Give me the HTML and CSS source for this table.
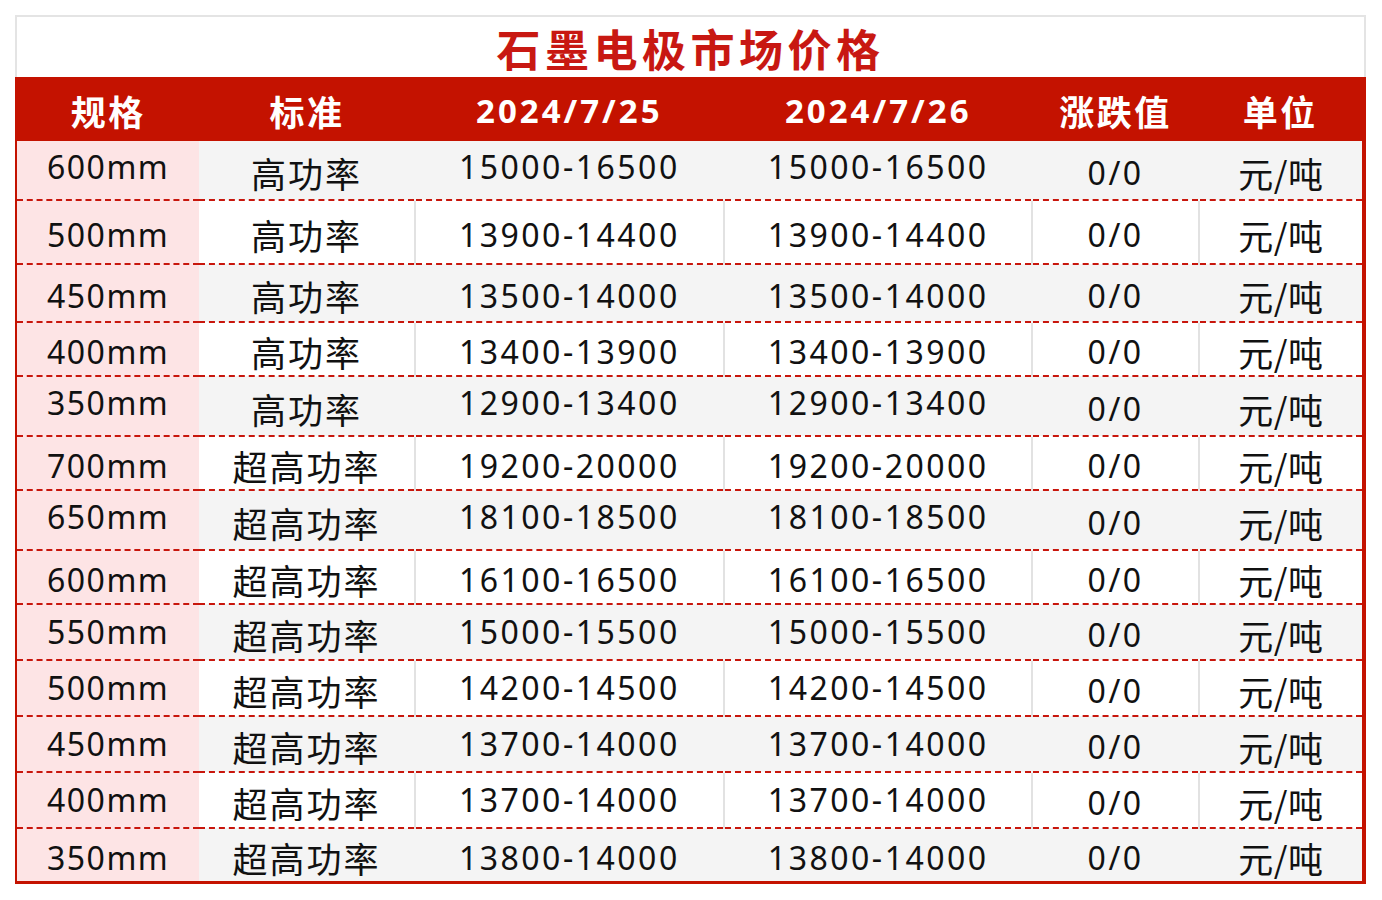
FILE: index.html
```html
<!DOCTYPE html>
<html lang="zh-CN">
<head>
<meta charset="utf-8">
<title>石墨电极市场价格</title>
<link rel="stylesheet" href="styles.css">
</head>
<body>
<div class="sheet">
  <div class="title">石墨电极市场价格</div>
  <table class="grid">
    <colgroup>
      <col class="c1"><col class="c2"><col class="c3"><col class="c4"><col class="c5"><col class="c6">
    </colgroup>
    <thead>
      <tr class="head">
        <th>规格</th><th>标准</th><th>2024/7/25</th><th>2024/7/26</th><th>涨跌值</th><th>单位</th>
      </tr>
    </thead>
    <tbody>
      <tr class="odd h59 shift"><td>600mm</td><td>高功率</td><td>15000-16500</td><td>15000-16500</td><td>0/0</td><td>元/吨</td></tr>
      <tr class="even h64"><td>500mm</td><td>高功率</td><td>13900-14400</td><td>13900-14400</td><td>0/0</td><td>元/吨</td></tr>
      <tr class="odd h58"><td>450mm</td><td>高功率</td><td>13500-14000</td><td>13500-14000</td><td>0/0</td><td>元/吨</td></tr>
      <tr class="even h54"><td>400mm</td><td>高功率</td><td>13400-13900</td><td>13400-13900</td><td>0/0</td><td>元/吨</td></tr>
      <tr class="odd h60 shift"><td>350mm</td><td>高功率</td><td>12900-13400</td><td>12900-13400</td><td>0/0</td><td>元/吨</td></tr>
      <tr class="even h54"><td>700mm</td><td>超高功率</td><td>19200-20000</td><td>19200-20000</td><td>0/0</td><td>元/吨</td></tr>
      <tr class="odd h60 shift"><td>650mm</td><td>超高功率</td><td>18100-18500</td><td>18100-18500</td><td>0/0</td><td>元/吨</td></tr>
      <tr class="even h54"><td>600mm</td><td>超高功率</td><td>16100-16500</td><td>16100-16500</td><td>0/0</td><td>元/吨</td></tr>
      <tr class="odd h56 shift small"><td>550mm</td><td>超高功率</td><td>15000-15500</td><td>15000-15500</td><td>0/0</td><td>元/吨</td></tr>
      <tr class="even h56 shift small"><td>500mm</td><td>超高功率</td><td>14200-14500</td><td>14200-14500</td><td>0/0</td><td>元/吨</td></tr>
      <tr class="odd h56 shift small"><td>450mm</td><td>超高功率</td><td>13700-14000</td><td>13700-14000</td><td>0/0</td><td>元/吨</td></tr>
      <tr class="even h56 shift small"><td>400mm</td><td>超高功率</td><td>13700-14000</td><td>13700-14000</td><td>0/0</td><td>元/吨</td></tr>
      <tr class="odd h54 last"><td>350mm</td><td>超高功率</td><td>13800-14000</td><td>13800-14000</td><td>0/0</td><td>元/吨</td></tr>
    </tbody>
  </table>
</div>
</body>
</html>
```

FILE: styles.css
```css
html, body {
  margin: 0;
  padding: 0;
  background: #ffffff;
}

body {
  font-family: "Noto Sans", "Noto Sans CJK SC", sans-serif;
  color: #111111;
}

.sheet {
  margin: 15px 0 0 15px;
  width: 1351px;
}

.title {
  box-sizing: border-box;
  height: 62px;
  border: 2px solid #e4e4e4;
  border-bottom: none;
  text-align: center;
  font-family: "Noto Sans CJK SC", sans-serif;
  font-weight: 700;
  font-size: 44px;
  letter-spacing: 4.5px;
  line-height: 62px;
  color: #c81812;
}

.grid {
  width: 1351px;
  border-collapse: collapse;
  table-layout: fixed;
  border-left: 2px solid #c41200;
  border-right: 4px solid #c41200;
  border-bottom: 3px solid #c41200;
}

.c1 { width: 183px; }
.c2 { width: 215px; }
.c3 { width: 309px; }
.c4 { width: 308px; }
.c5 { width: 166px; }
.c6 { width: 165px; }

.head {
  height: 64px;
  background: #c41200;
}

.head th {
  padding: 4px 0 0 0;
  color: #ffffff;
  font-family: "Noto Sans CJK SC", sans-serif;
  font-weight: 700;
  font-size: 35px;
  letter-spacing: 2.5px;
  text-align: center;
  vertical-align: middle;
  line-height: 58px;
}

.head th:nth-child(3),
.head th:nth-child(4) {
  font-family: "Noto Sans", sans-serif;
  font-size: 33px;
  letter-spacing: 3px;
}

.grid td {
  padding: 6px 0 0 0;
  text-align: center;
  vertical-align: middle;
  font-size: 32px;
  letter-spacing: 2.5px;
  line-height: 40px;
  border-bottom: 2px dashed #c8160c;
}

.grid td:first-child {
  letter-spacing: 1.5px;
}

.grid td:nth-child(2),
.grid td:nth-child(6) {
  font-family: "Noto Sans CJK SC", sans-serif;
  font-size: 35px;
  letter-spacing: 2px;
}

.grid td:nth-child(6) {
  letter-spacing: 0.5px;
}

.grid tr.last td {
  border-bottom: none;
}

.odd td { background: #f4f4f4; }
.even td { background: #ffffff; }
.grid td:first-child { background: #fde4e5; }

.even td:nth-child(n+3) {
  border-left: 2px solid #e2e2e2;
}

.odd td:nth-child(n+3) {
  border-left: 2px solid #f4f4f4;
}

.shift td:nth-child(1),
.shift td:nth-child(3),
.shift td:nth-child(4) {
  padding-bottom: 12px;
}

.shift.small td:nth-child(1),
.shift.small td:nth-child(3),
.shift.small td:nth-child(4) {
  padding-bottom: 6px;
}

.h54 { height: 54px; }
.h56 { height: 56px; }
.h58 { height: 58px; }
.h59 { height: 59px; }
.h60 { height: 60px; }
.h64 { height: 64px; }
```
